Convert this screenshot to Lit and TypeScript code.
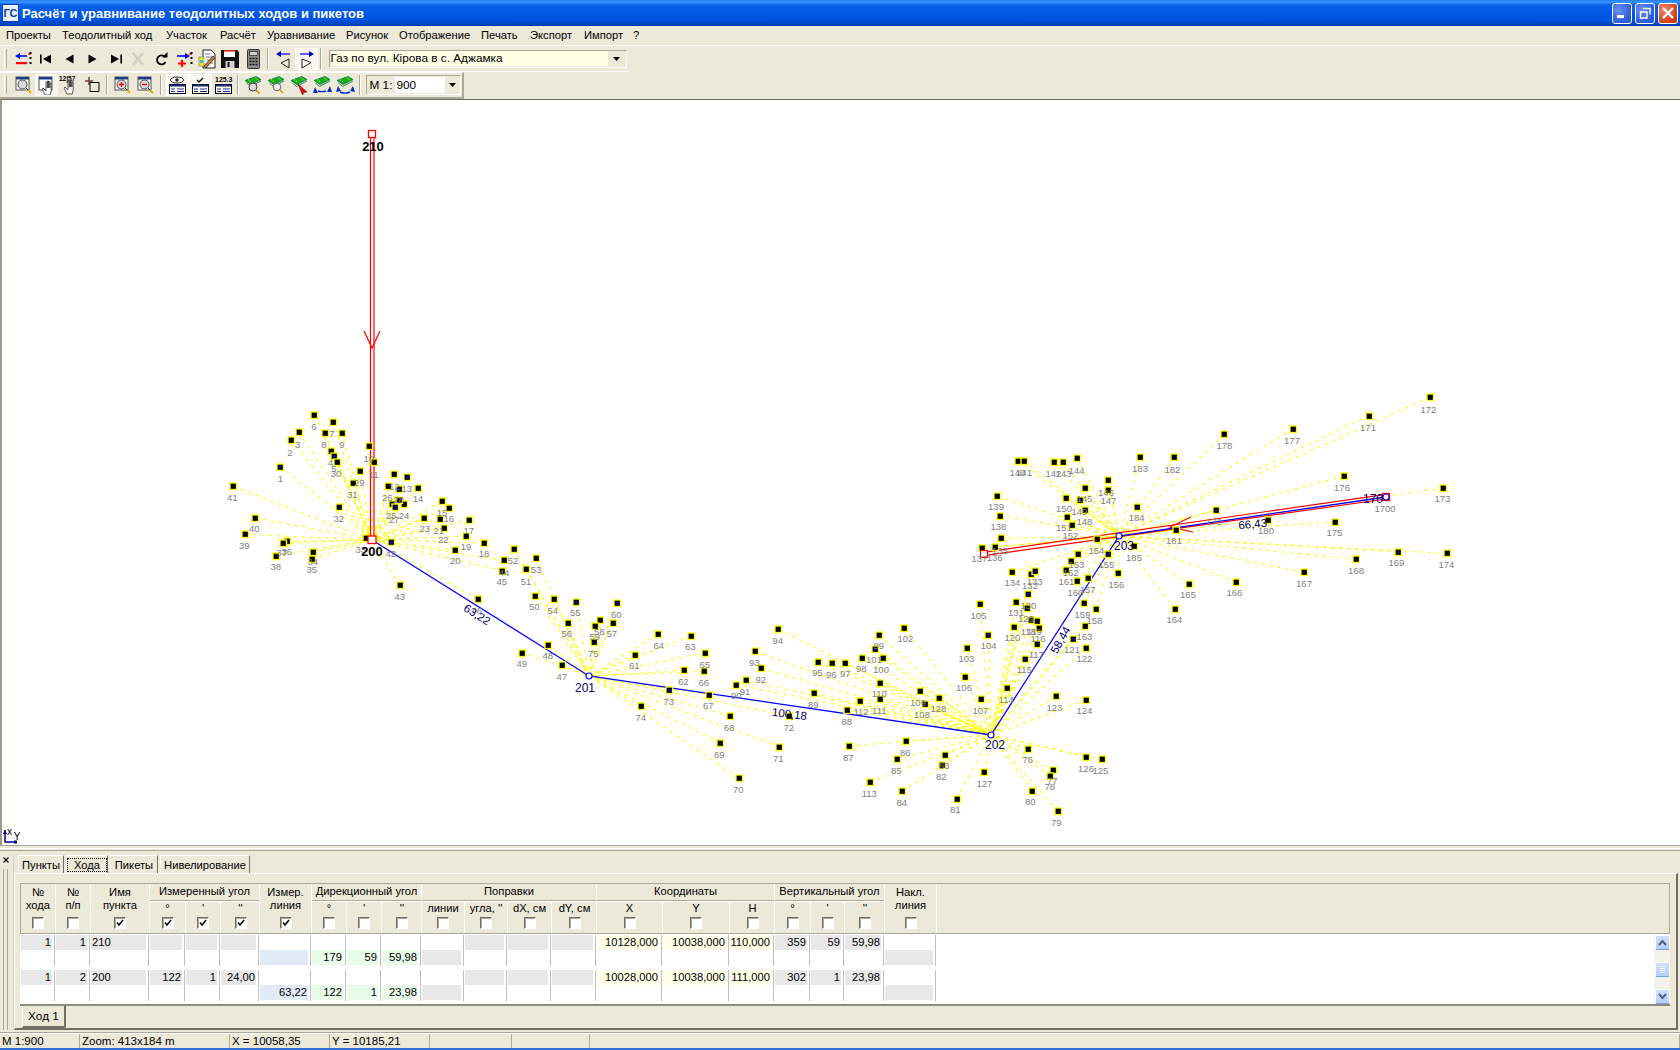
import { LitElement, html, css, svg } from "lit";
import { customElement } from "lit/decorators.js";

const RAW: Record<string, string> = {
  "210,400": "1 211 200 211 236;2 244 121 240 158;3 266 97 263 134;4 364 152 362 188;5 373 168 372 204;6 313 44 312 80;7 370 66 366 100;8 344 98 342 134;9 395 98 396 134;10 476 139 476 176;11 491 187 491 223;12 553 223 553 260;13 590 230 590 266;14 624 264 624 295;15 696 304 696 338;16 718 323 716 356;17 776 361 776 392;18 822 428 822 460;19 768 408 768 440;20 736 450 736 482;21 691 356 686 390;22 703 385 700 418;23 643 353 644 386;24 582 313 582 347;25 546 311 543 345;26 534 259 532 292;27 555 322 552 358;28 566 266 566 298;29 450 212 448 248;30 381 185 378 221;31 429 248 427 284;32 388 321 386 355;33 468 413 452 447;34 308 456 308 485;35 306 476 305 508;36 232 424 230 455;37 219 430 215 458;38 198 468 197 500;39 106 403 103 436;40 136 353 133 386;41 70 259 67 293;42 542 427 542 460;43 571 556 569 590;44 882 481 882 516;45 876 512 875 545;46 805 597 800 630;x 567 299 0 0",
  "0,0": "51 526 569 526 581;52 514 549 513 560;53 536 558 536 569",
  "480,580": "47 245 254 245 290;48 204 194 203 226;49 126 218 125 250;50 166 47 163 80;54 221 57 218 90;55 289 66 286 97;56 263 129 260 160;57 398 129 395 160;58 361 121 358 154;59 346 138 344 170;60 410 70 409 103;61 466 224 463 256;62 611 271 610 305;63 632 168 631 199;64 535 163 536 196;65 676 218 674 252;66 672 274 671 306;67 688 345 685 377;68 750 408 748 442;69 720 490 718 523;70 776 594 775 628;71 897 500 895 535;72 928 408 926 442;73 567 329 566 365;74 483 379 482 412;75 343 185 340 219;90 769 314 769 345;91 798 301 795 335;92 844 265 842 299;93 825 214 823 248;94 894 148 893 180",
  "800,600": "76 685 447 683 478;77 759 511 757 541;78 751 528 749 559;79 774 634 769 667;80 696 572 691 604;81 471 596 466 628;82 426 496 424 529;83 435 465 433 497;84 305 574 305 606;85 291 478 289 510;86 317 424 316 458;87 147 438 145 472;88 141 330 140 364;89 43 280 40 313;95 54 186 52 217;96 97 190 94 222;97 136 189 136 220;98 186 174 184 205;99 237 105 236 136;100 249 175 243 207;101 224 146 222 178;102 313 84 316 115;103 501 144 499 175;104 565 105 566 136;105 540 13 535 47;106 494 231 492 262;107 544 297 541 331;108 374 312 366 344;109 360 272 354 308;110 241 249 238 281;111 239 298 238 332;112 181 303 183 335;113 211 547 208 580;114 621 265 619 298;115 676 176 673 208;116 717 85 714 115;117 711 131 709 163;118 692 60 685 95;119 710 62 703 95;120 641 81 637 113;121 818 116 816 148;122 858 144 853 175;123 768 289 763 322;124 858 300 853 331;125 905 478 901 511;126 859 471 858 505;127 553 516 553 550;128 417 294 415 326",
  "960,420": "129 201 563 198 596;130 205 523 205 556;131 169 545 168 578;132 214 463 210 497;133 226 453 224 485;134 157 456 157 488;135 106 380 120 390;136 124 355 104 412;137 67 384 58 415;138 120 287 115 320;139 112 228 108 260;140 175 123 172 158;141 192 123 192 158;142 283 126 280 161;143 308 127 310 161;144 352 115 350 151;145 376 203 373 236;146 444 181 438 218;147 445 211 445 242;148 374 271 373 304;149 361 240 358 274;150 318 234 312 265;151 320 292 312 323;152 336 315 331 347;153 353 402 349 433;154 411 358 409 391;155 443 401 439 433;156 474 460 469 492;157 384 475 383 508;158 408 568 403 601;159 372 550 367 583;160 352 484 346 517;161 319 451 319 484;162 332 424 332 457;163 376 617 373 650;164 645 567 643 598;165 686 492 684 523",
  "1130,380": "166 317 606 313 637;167 522 577 522 610;168 679 538 678 571;169 804 515 799 548;171 716 107 714 142;172 900 52 895 89;173 940 324 937 355;174 950 520 949 553;175 615 426 613 457;176 642 288 636 322;177 490 146 486 181;178 283 161 283 196;179 258 391 252 425;180 413 420 408 452;181 137 450 132 482;182 132 232 127 268;183 31 231 30 265;184 20 381 20 413;185 12 499 12 532",
};

type Pk = { n: string; x: number; y: number; lx: number; ly: number };
const PTS: Pk[] = [];
for (const k of Object.keys(RAW)) {
  const [ox, oy] = k.split(",").map(Number);
  const f = ox === 0 ? 1 : 3;
  for (const r of RAW[k].split(";")) {
    const [n, a, b, c, d] = r.split(" ");
    PTS.push({ n, x: ox + +a / f, y: oy + +b / f, lx: ox + +c / f, ly: oy + +d / f });
  }
}

const ST: Record<string, [number, number]> = {
  s200: [372, 540],
  s201: [589, 676],
  s202: [991, 735],
  s203: [1119, 536],
  s1700: [1386, 497],
};
function owner(n: string): [number, number] {
  if (n === "x") return ST.s200;
  const v = +n;
  if (v <= 46) return ST.s200;
  if (v <= 75) return ST.s201;
  if (v <= 133 || v === 163) return ST.s202;
  return ST.s203;
}
const BLUE = new Set(["1", "5", "13", "25", "27", "28", "36", "42", "55", "60", "73", "101", "104", "115", "121", "130", "132", "133", "149", "155", "169", "179", "184"]);

const W = [35, 35, 59, 36, 35, 39, 52, 35, 35, 40, 43, 43, 44, 45, 66, 67, 45, 36, 34, 40, 52];

const I = (b: unknown) => html`<svg width="23" height="22" viewBox="0 0 23 22">${b}</svg>`;
const dots = svg`<path d="M18.5 4v15" stroke="#000" stroke-width="2" stroke-dasharray="2 3"/>`;
const win = svg`<rect x="4" y="3" width="13" height="13" fill="#fff" stroke="#555"/><rect x="4" y="3" width="13" height="2.500" fill="#1a3a8a"/>`;
const lens = (c: unknown) => svg`<circle cx="10.500" cy="10.500" r="4.500" fill="#d8d8d8" stroke="#555" stroke-width="1.100"/>${c}<path d="M14 14l2.500 2.500" stroke="#222" stroke-width="1"/><path d="M16 16l3 3" stroke="#d8b000" stroke-width="1.800"/>`;
const hand = svg`<path d="M7 19l-3-6 1-1 3 3V6h1.300v6V5h1.300v7V5.500h1.300V12V7h1.300v8l-1 4z" fill="#fff" stroke="#333" stroke-width=".8"/>`;
const table = svg`<rect x="3.500" y="10.500" width="16" height="9" fill="#fff" stroke="#000"/><path d="M3.500 10.500h16v2h-16z" fill="#1a2a6a"/><path d="M5 15h4M11 15h7M5 17.500h4M11 17.500h7" stroke="#1a2a9a" stroke-width="1"/>`;
const map = (c: unknown) => svg`<path d="M3 6.500L14 2.500l5 3L9 10.500z" fill="#10b020" stroke="#074" stroke-width=".8"/><path d="M6 5.500l4 3M13 3.500l3 3" stroke="#f4e020" stroke-width="1" stroke-dasharray="1.500 1"/><path d="M4.500 9l4 3.500L19 7" fill="none" stroke="#063" stroke-width=".8"/>${c}`;

const ROW1 = [
  I(svg`<path d="M5 8h10" stroke="#00f" stroke-width="1.600"/><path d="M8 5L3 8l5 3z" fill="#00f"/><rect x="4" y="14" width="11" height="2.200" fill="#f00"/><rect x="16.500" y="5" width="2" height="2" fill="#f00"/>${dots}`),
  I(svg`<rect x="5" y="6.500" width="1.600" height="9"/><path d="M16 6.500l-8 4.500 8 4.500z"/>`),
  I(svg`<path d="M15.500 6.500l-8 4.500 8 4.500z"/>`),
  I(svg`<path d="M7.500 6.500l8 4.500-8 4.500z"/>`),
  I(svg`<rect x="16.400" y="6.500" width="1.600" height="9"/><path d="M7 6.500l8 4.500-8 4.500z"/>`),
  I(svg`<path d="M6 5l10 12M16 5L6 17" stroke="#c8c5b5" stroke-width="2.400"/><path d="M6 5l10 12M16 5L6 17" stroke="#ece9d8" stroke-width=".6"/>`),
  I(svg`<path d="M15 9a4.500 4.500 0 1 0 .5 5" fill="none" stroke="#000" stroke-width="1.800"/><path d="M12 9.500h5.500V4z"/>`),
  I(svg`<path d="M4 8h10" stroke="#00f" stroke-width="1.600"/><path d="M12 5l5 3-5 3z" fill="#00f"/><path d="M5 15.500h8M9 12v7" stroke="#f00" stroke-width="2.200"/><rect x="16.500" y="5" width="2" height="2" fill="#f00"/>${dots}`),
  I(svg`<path d="M7 2h8l4 4v14H7z" fill="#fff" stroke="#222"/><path d="M9 6h5M10 9h7M11 12h6M12 15h5" stroke="#777"/><rect x="3" y="9" width="5" height="9" fill="#ffe820" stroke="#886" stroke-width=".7"/><path d="M8 18L17 8l2 2-9 10z" fill="#c08030" stroke="#222" stroke-width=".7"/><rect x="4" y="12" width="3" height="3" fill="#30c0e0"/>`),
  I(svg`<path d="M2 2h16l2 2v16H2z" fill="#111"/><rect x="5" y="2" width="11" height="7" fill="#fff"/><rect x="5" y="2" width="11" height="1.600" fill="#e02020"/><rect x="6.500" y="13" width="9" height="7" fill="#d0d0d0"/><rect x="8.500" y="14" width="2" height="5" fill="#111"/>`),
  I(svg`<rect x="5.500" y="1.500" width="12" height="19" rx="1" fill="#8c8c8c" stroke="#333"/><rect x="7.500" y="3.500" width="8" height="4" fill="#c8d4b8" stroke="#222" stroke-width=".7"/><path d="M7.500 10.500h8M7.500 13.500h8M7.500 16.500h8" stroke="#111" stroke-width="1.400" stroke-dasharray="2 1"/>`),
];
const ROW1B = [
  I(svg`<path d="M6 6h12" stroke="#00c" stroke-width="1.200"/><path d="M9 3L4 6l5 3z" fill="#00c"/><path d="M17 11L9 15l8 5z" fill="none" stroke="#222"/>`),
  I(svg`<path d="M5 6h12" stroke="#00c" stroke-width="1.200"/><path d="M14 3l5 3-5 3z" fill="#00c"/><path d="M7 11l9 3.500-9 5.500z" fill="none" stroke="#222"/>`),
];
const ROW2A = [
  I(svg`${win}${lens(svg``)}`),
  I(svg`${win}<g transform="translate(3 2)">${hand}</g>`),
  I(svg`<text x="1" y="7" font-family="Liberation Sans" font-size="6.500" font-weight="700">12|57</text><g transform="translate(2 1)">${hand}</g>`),
  I(svg`<path d="M8 3v8M4 7h8" stroke="#000"/><path d="M9 8.500h9v9H9z" fill="none" stroke="#000"/><rect x="7" y="6" width="2" height="2" fill="#e02020"/>`),
];
const ROW2B = [
  I(svg`${win}${lens(svg`<path d="M8 10.500h5M10.500 8v5" stroke="#e00" stroke-width="1.300"/>`)}`),
  I(svg`${win}${lens(svg`<path d="M8 10.500h5" stroke="#e00" stroke-width="1.300"/>`)}`),
];
const ROW2C = [
  I(svg`<ellipse cx="11" cy="6" rx="6.500" ry="3" fill="#fff" stroke="#222"/><circle cx="11" cy="6" r="1.800" fill="#222"/>${table}`),
  I(svg`<path d="M8 6l2 2 4-4" fill="none" stroke="#000" stroke-width="1.300"/>${table}`),
  I(svg`<text x="3" y="7.500" font-family="Liberation Sans" font-size="7" font-weight="700">125.3</text>${table}`),
];
const ROW2D = [
  I(svg`${map(svg`<circle cx="11" cy="13" r="4" fill="#d8d8d8" stroke="#444"/><path d="M14 16l3.500 3.500" stroke="#c8a000" stroke-width="1.800"/>`)}`),
  I(svg`${map(svg`<circle cx="12" cy="13" r="3.800" fill="#eee" stroke="#666"/><path d="M15 16l3 3" stroke="#c8a000" stroke-width="1.600"/>`)}`),
  I(svg`${map(svg`<path d="M10 10l9 8-3 .5-1.500 2.500z" fill="#e01010" stroke="#600" stroke-width=".5"/>`)}`),
  I(svg`${map(svg`<path d="M4 13l3 6-5 0z" fill="#0030c0"/><path d="M7 17a9 6 0 0 0 8 0" fill="none" stroke="#0030c0" stroke-width="1.400"/><path d="M19 12l-3 6 5 0z" fill="#0030c0"/>`)}`),
  I(svg`${map(svg`<path d="M4 12l3 5-5 1z" fill="#0030c0"/><path d="M6 18a9 6 0 0 0 10 0" fill="none" stroke="#0030c0" stroke-width="1.400"/><path d="M19 12l-3 5 5 1z" fill="#0030c0"/>`)}`),
];

const arrow = html`<svg width="7" height="4" viewBox="0 0 7 4"><path d="M0 0h7L3.500 4z"/></svg>`;

type Cell = { t?: string; b?: string; tc?: string; bc?: string; a?: string };
const ROWS: Cell[][] = [
  [
    { t: "1", tc: "g" }, { t: "1", tc: "g" }, { t: "210", tc: "g", a: "l" },
    { tc: "g" }, { tc: "g" }, { tc: "g" }, { bc: "b" },
    { b: "179", bc: "v" }, { b: "59", bc: "v" }, { b: "59,98", bc: "v" },
    { bc: "g" }, { tc: "g" }, { tc: "g" }, { tc: "g" },
    { t: "10128,000", tc: "y" }, { t: "10038,000", tc: "y" }, { t: "110,000", tc: "y" },
    { t: "359", tc: "g" }, { t: "59", tc: "g" }, { t: "59,98", tc: "g" }, { bc: "g" },
  ],
  [
    { t: "1", tc: "g" }, { t: "2", tc: "g" }, { t: "200", tc: "g", a: "l" },
    { t: "122", tc: "g" }, { t: "1", tc: "g" }, { t: "24,00", tc: "g" }, { b: "63,22", bc: "b" },
    { b: "122", bc: "v" }, { b: "1", bc: "v" }, { b: "23,98", bc: "v" },
    { bc: "g" }, { tc: "g" }, { tc: "g" }, { tc: "g" },
    { t: "10028,000", tc: "y" }, { t: "10038,000", tc: "y" }, { t: "111,000", tc: "y" },
    { t: "302", tc: "g" }, { t: "1", tc: "g" }, { t: "23,98", tc: "g" }, { bc: "g" },
  ],
];

@customElement("app-root")
export class AppRoot extends LitElement {
  static styles = css`
    :host { display: flex; flex-direction: column; width: 1680px; height: 1050px; background: #ece9d8; overflow: hidden;
      font-family: "Liberation Sans", Arial, sans-serif; font-size: 11.2px; color: #000; }
    .title { height: 26px; flex: none; display: flex; align-items: center; padding-left: 2px; gap: 3px; color: #fff;
      font-weight: 700; font-size: 13px;
      background: linear-gradient(#1f7cf0 0, #3e95ff 2px, #0a62ea 5px, #0058e4 14px, #0054e0 20px, #0048cc 23px, #0038a8 26px); }
    .title .t { flex: 1; }
    .wb { display: flex; gap: 3px; padding-right: 2px; }
    .wbtn { width: 20px; height: 21px; box-sizing: border-box; border: 1px solid #fff; border-radius: 3px;
      background: radial-gradient(circle at 30% 30%, #6a90ee, #2a58d8 75%); display: flex; align-items: center; justify-content: center; }
    .wbtn.c { background: radial-gradient(circle at 30% 30%, #ee8a6a, #d03a14 75%); }
    .menu { height: 19px; flex: none; display: flex; align-items: center; position: relative; }
    .menu span { position: absolute; top: 3px; white-space: nowrap; }
    .wl { height: 1px; background: #fff; flex: none; }
    .tb { flex: none; display: flex; align-items: center; box-sizing: border-box; position: relative; }
    .tb1 { height: 26px; width: 628px; padding-left: 11.5px; border-bottom: 1px solid #fff; }
    .tb2 { height: 27px; width: 464px; padding-left: 11.5px; border-right: 2px solid #aca899; border-bottom: 2px solid #aca899; border-top: 1px solid #fff; }
    .grip { position: absolute; left: 4px; top: 3px; bottom: 3px; width: 1px; border-left: 1px solid #fff; border-right: 1px solid #aca899; }
    .ib { width: 23px; height: 22px; flex: none; display: flex; box-sizing: border-box; }
    .ib svg { display: block; flex: none; }
    .ib.p { background: #f6f5ee; outline: 1px solid #fff; outline-offset: -1px; box-shadow: inset -1px -1px 0 #fff, inset 1px 1px 0 #d6d3c4; }
    .sep { width: 7px; flex: none; align-self: stretch; display: flex; justify-content: center; margin: 2px 0; }
    .sep::after { content: ""; width: 1px; background: #aca899; border-right: 1px solid #fff; }
    .sep.w { width: 9px; }
    .combo { display: flex; align-items: center; box-sizing: border-box; height: 18px; border: 1px solid #fff; border-left-color: #aca899; border-top-color: #aca899; }
    .c1 { width: 298px; margin-left: 4px; padding: 1px; }
    .c1 .f { flex: 1; background: #ffffe6; height: 15px; line-height: 15px; padding-left: 0; font-size: 11.8px; white-space: nowrap; }
    .c1 .a { width: 17px; display: flex; justify-content: center; }
    .c2 { width: 95px; margin-left: 2px; padding-left: 3px; height: 20px; font-size: 11.8px; white-space: nowrap; }
    .c2 .f { background: #fff; width: 53px; height: 16px; line-height: 16px; margin-left: 3px; padding-left: 1px; box-sizing: border-box; }
    .c2 .a { width: 15px; display: flex; justify-content: center; }
    .canvas { flex: 1; min-height: 0; background: #fff; border-top: 1px solid #716f64; border-left: 2px solid #9d9a8a; box-sizing: border-box; overflow: hidden; display: flex; }
    .canvas svg { display: block; flex: none; }
    .rim { height: 10px; flex: none; border-top: 1px solid #aca899; box-sizing: border-box; background: linear-gradient(#ece9d8 0 2px, #fff 2px 3px, #ece9d8 3px 4px, #aca899 4px 5px, #ece9d8 5px); }
    .bottom { flex: none; height: 175px; display: flex; }
    .dock { width: 14px; flex: none; position: relative; border-right: 1px solid #d0cdbc; box-sizing: border-box; }
    .dock svg { display: block; margin: 1px 0 0 2px; }
    .dock i { position: absolute; left: 3px; top: 14px; bottom: 0; width: 3px; border-left: 1px solid #aca899; border-right: 1px solid #aca899; }
    .right { flex: 1; min-width: 0; display: flex; flex-direction: column; padding-right: 2px; }
    .tabs { height: 18px; flex: none; display: flex; padding-left: 4px; align-items: flex-end; gap: 2px; }
    .tab { height: 18px; box-sizing: border-box; border: 1px solid #fff; border-right: 1px solid #716f64; border-bottom: none; padding: 3px 0 0; text-align: center; white-space: nowrap; }
    .tab.s span { outline: 1px dotted #000; padding: 0 6px; }
    .panel { height: 157px; flex: none; border: 1px solid #fff; border-right: 2px solid #716f64; border-bottom: 2px solid #716f64; box-sizing: border-box; padding: 9px 6px 0 5px; display: flex; flex-direction: column; }
    .hdr { display: flex; height: 51px; flex: none; border: 1px solid #aca899; box-sizing: border-box; }
    .hc { box-sizing: border-box; flex: none; display: flex; flex-direction: column; align-items: center; border-right: 1px solid #fff; text-align: center; line-height: 13px; position: relative; padding-top: 2px; }
    .hc .cb { position: absolute; bottom: 4px; left: 50%; margin-left: -6px; }
    .grp { flex: none; display: flex; flex-direction: column; box-sizing: border-box; border-right: 1px solid #fff; }
    .grp .gt { height: 17px; flex: none; text-align: center; line-height: 15px; border-bottom: 1px solid #aca899; box-shadow: 0 1px 0 #fff; box-sizing: border-box; white-space: nowrap; }
    .grp .gs { display: flex; flex: 1; }
    .grp .hc { height: 32px; padding-top: 1px; }
    .grp .hc:last-child { border-right: none; }
    .cb { width: 12px; height: 12px; box-sizing: border-box; background: #fff; border: 1px solid #fff; border-left-color: #716f64; border-top-color: #716f64; box-shadow: inset 1px 1px 0 #aca899; display: block; }
    .cb svg { display: block; margin: 1px; }
    .body { flex: none; height: 72px; background: #fff; display: flex; padding-top: 1px; box-sizing: border-box; border-bottom: 2px solid #8d8b7c; }
    .rows { flex: 1; display: flex; flex-direction: column; gap: 4px; }
    .row { display: flex; height: 31px; }
    .cell { flex: none; box-sizing: border-box; border-right: 1px solid #c0c0c0; padding: 0 2px 0 1px; display: flex; flex-direction: column; }
    .ln { height: 15px; line-height: 15px; text-align: right; padding-right: 1px; white-space: nowrap; box-sizing: border-box; }
    .ln.l { text-align: left; padding-left: 1px; }
    .g { background: #e8e8e8; }
    .b { background: #e2eaf5; }
    .v { background: #e9fbe9; }
    .y { background: #ffffe9; }
    .sb { width: 16px; flex: none; background: #f3f2ec; display: flex; flex-direction: column; justify-content: space-between; position: relative; align-items: center; height: 69px; }
    .sbb { width: 15px; height: 15px; box-sizing: border-box; border: 1px solid #fff; border-radius: 2px; background: linear-gradient(#d2e0fc, #b8cdf8); border-bottom-color: #7d9fe0; display: flex; align-items: center; justify-content: center; }
    .tab2row { flex: 1; display: flex; padding-left: 2px; }
    .tab2 { width: 44px; height: 22px; box-sizing: border-box; border: 1px solid #fff; border-top: none; border-right: 2px solid #716f64; border-bottom: 2px solid #716f64; text-align: center; line-height: 21px; font-size: 11.8px; border-radius: 0 0 2px 0; }
    .gapl { height: 2px; flex: none; border-bottom: 1px solid #aca899; box-sizing: content-box; }
    .status { height: 15px; flex: none; display: flex; border-top: 1px solid #fff; box-sizing: border-box; }
    .status div { box-sizing: border-box; border-right: 1px solid #aca899; padding-left: 2px; flex: none; height: 15px; line-height: 14px; white-space: nowrap; font-size: 11.5px; }
    .strip { height: 2px; flex: none; background: #2f70d8; }
    text { font-family: "Liberation Sans", Arial, sans-serif; }
  `;

  private cb(on: boolean) {
    return html`<span class="cb">${on
      ? html`<svg width="8" height="8" viewBox="0 0 8 8"><path d="M1 3.500l2 2.500 4-5" fill="none" stroke="#000" stroke-width="1.600"/></svg>`
      : ""}</span>`;
  }

  private hc(idx: number, label: unknown, on: boolean) {
    return html`<div class="hc" style="width:${W[idx]}px">${label}${this.cb(on)}</div>`;
  }

  private grp(title: string, start: number, labels: string[], on: boolean) {
    const w = labels.reduce((s, _, i) => s + W[start + i], 0);
    return html`<div class="grp" style="width:${w}px">
      <div class="gt">${title}</div>
      <div class="gs">${labels.map((l, i) => this.hc(start + i, l, on))}</div>
    </div>`;
  }

  private canvas() {
    const [ax, ay] = ST.s200;
    const [bx, by] = ST.s201;
    const [cx, cy] = ST.s202;
    const [dx, dy] = ST.s203;
    const [ex, ey] = ST.s1700;
    const rx = 984, ry = 554;
    const ring = (x: number, y: number) => svg`<circle cx=${x} cy=${y} r="3" fill="#fff" stroke="#00f" stroke-width="1.100"/>`;
    const st = (t: string, x: number, y: number, c = "#00006e") => svg`<text x=${x} y=${y} text-anchor="middle" font-size="12" fill=${c}>${t}</text>`;
    const rot = (t: string, x: number, y: number, a: number) =>
      svg`<text transform="translate(${x} ${y}) rotate(${a})" text-anchor="middle" font-size="11.500" fill="#00006e">${t}</text>`;
    return html`<svg width="1678" height="745" viewBox="2 100 1678 745">
      <g stroke="#ffff00" stroke-width="1.100" stroke-dasharray="3 5" fill="none">
        ${PTS.map((p) => {
          const [ox, oy] = owner(p.n);
          return svg`<line x1=${p.x} y1=${p.y} x2=${ox} y2=${oy}/>`;
        })}
      </g>
      <g fill="none" stroke="#ff0000" stroke-width="1.200">
        <path d="M370.500 134V540M374 134V540"/>
        <path d="M364 331L372 348L380 331"/>
        <path d="M${rx} ${ry - 1.7}L${ex} ${ey - 2.700}M${rx} ${ry + 1.7}L${ex} ${ey + 2}"/>
        <path d="M1191 517L1170 527L1193 532"/>
        <rect x="368.500" y="130.500" width="7" height="7" fill="#fff" stroke-width="1.300"/>
      </g>
      <path d="M${ax} ${ay}L${bx} ${by}L${cx} ${cy}L${dx} ${dy}L${ex} ${ey}" fill="none" stroke="#0000ff" stroke-width="1.300"/>
      <g>
        ${PTS.map((p) => svg`
          <rect x=${Math.round(p.x) - 3} y=${Math.round(p.y) - 3} width="6.500" height="6.500" fill="#000" stroke="#ffff00" stroke-width="1.300"/>
          ${BLUE.has(p.n) ? svg`<rect x=${Math.round(p.x) - 1} y=${Math.round(p.y) - 1} width="2.500" height="2.500" fill="#0000d0"/>` : ""}
        `)}
      </g>
      <rect x="${rx - 3.500}" y="${ry - 3.500}" width="7" height="7" fill="#fff" stroke="#f00" stroke-width="1.200"/>
      <rect x="368" y="536" width="8" height="7.500" fill="#fff" stroke="#f00" stroke-width="1.300"/>
      <rect x="1382.500" y="493.500" width="7" height="7" fill="#fff" stroke="#f00" stroke-width="1.300"/>
      ${ring(bx, by)}${ring(cx, cy)}${ring(dx, dy)}${ring(ex, ey)}
      <g font-size="9.500" fill="#808080" text-anchor="middle">
        ${PTS.filter((p) => p.n !== "x").map((p) => svg`<text x=${p.lx} y=${p.ly + 3.500}>${p.n}</text>`)}
        <text x="1385" y="511.500">1700</text>
      </g>
      ${st("201", 585, 692)}${st("202", 995, 749)}${st("203", 1124, 550)}${st("170", 1373, 503)}
      <text x="372" y="556" text-anchor="middle" font-size="13" font-weight="700" fill="#000">200</text>
      <text x="373" y="151" text-anchor="middle" font-size="13" font-weight="700" fill="#000">210</text>
      ${rot("63,22", 475, 618, 32)}${rot("100,18", 789, 718, 7)}${rot("58,44", 1064, 642, -61)}${rot("66,43", 1253, 528, -5)}
      <path d="M5 830V842H16" fill="none" stroke="#00008a" stroke-width="1.500"/>
      <path d="M3 834l2-4 2 4z" fill="#00008a"/><rect x="14" y="840.500" width="3" height="3" fill="#00008a"/>
      <text x="9.500" y="835" font-size="10" text-anchor="middle" fill="#000">x</text><text x="17" y="840" font-size="10" text-anchor="middle" fill="#000">Y</text>
    </svg>`;
  }

  render() {
    const menu: [string, number][] = [["Проекты", 6], ["Теодолитный ход", 62], ["Участок", 166], ["Расчёт", 220], ["Уравнивание", 267], ["Рисунок", 346], ["Отображение", 399], ["Печать", 481], ["Экспорт", 530], ["Импорт", 584], ["?", 633]];
    const ib = (x: unknown, p = false) => html`<div class="ib ${p ? "p" : ""}">${x}</div>`;
    return html`
      <div class="title">
        <svg width="17" height="18" viewBox="0 0 17 18"><rect x=".5" y=".5" width="16" height="17" fill="#e8f0ff" stroke="#1040a0"/><text x="8.500" y="13" text-anchor="middle" font-size="11" fill="#103a9a">ГС</text></svg>
        <span class="t">Расчёт и уравнивание теодолитных ходов и пикетов</span>
        <div class="wb">
          <div class="wbtn"><svg width="12" height="12"><rect x="1" y="8" width="7" height="3" fill="#fff"/></svg></div>
          <div class="wbtn"><svg width="12" height="12"><path d="M4 1.500h7v6M1.500 5h6.500v6H1.500z" fill="none" stroke="#fff" stroke-width="1.400"/></svg></div>
          <div class="wbtn c"><svg width="12" height="12"><path d="M1 1l10 10M11 1L1 11" stroke="#fff" stroke-width="2.200"/></svg></div>
        </div>
      </div>
      <div class="menu">${menu.map(([t, x]) => html`<span style="left:${x}px">${t}</span>`)}</div>
      <div class="wl"></div>
      <div class="tb tb1"><i class="grip"></i>
        ${ROW1.map((x) => ib(x))}<div class="sep"></div>${ib(ROW1B[0])}${ib(ROW1B[1], true)}<div class="sep"></div>
        <div class="combo c1"><div class="f">Газ по вул. Кірова в с. Аджамка</div><div class="a">${arrow}</div></div>
      </div>
      <div class="tb tb2"><i class="grip"></i>
        ${ib(ROW2A[0])}${ib(ROW2A[1], true)}${ib(ROW2A[2])}${ib(ROW2A[3])}<div class="sep"></div>
        ${ROW2B.map((x) => ib(x))}<div class="sep w"></div>
        ${ib(ROW2C[0], true)}${ib(ROW2C[1], true)}${ib(ROW2C[2])}<div class="sep"></div>
        ${ROW2D.map((x) => ib(x))}<div class="sep"></div>
        <div class="combo c2">M 1:<div class="f">900</div><div class="a">${arrow}</div></div>
      </div>
      <div class="canvas">${this.canvas()}</div>
      <div class="rim"></div>
      <div class="bottom">
        <div class="dock"><svg width="9" height="9"><path d="M1.500 1.500l5 5M6.500 1.500l-5 5" stroke="#000" stroke-width="1.200"/></svg><i></i></div>
        <div class="right">
          <div class="tabs">
            <div class="tab" style="width:46px">Пункты</div>
            <div class="tab s" style="width:42px"><span>Хода</span></div>
            <div class="tab" style="width:48px">Пикеты</div>
            <div class="tab" style="width:90px">Нивелирование</div>
          </div>
          <div class="panel">
            <div class="hdr">
              ${this.hc(0, html`№<br />хода`, false)}
              ${this.hc(1, html`№<br />п/п`, false)}
              ${this.hc(2, html`Имя<br />пункта`, true)}
              ${this.grp("Измеренный угол", 3, ["°", "'", "''"], true)}
              ${this.hc(6, html`Измер.<br />линия`, true)}
              ${this.grp("Дирекционный угол", 7, ["°", "'", "''"], false)}
              ${this.grp("Поправки", 10, ["линии", "угла, ''", "dX, см", "dY, см"], false)}
              ${this.grp("Координаты", 14, ["X", "Y", "H"], false)}
              ${this.grp("Вертикальный угол", 17, ["°", "'", "''"], false)}
              ${this.hc(20, html`Накл.<br />линия`, false)}
            </div>
            <div class="body">
              <div class="rows">
                ${ROWS.map((r) => html`<div class="row">${r.map((c, i) => html`<div class="cell" style="width:${W[i]}px">
                  <div class="ln ${c.tc ?? ""} ${c.a ?? ""}">${c.t ?? ""}</div>
                  <div class="ln ${c.bc ?? ""}">${c.b ?? ""}</div>
                </div>`)}</div>`)}
              </div>
              <div class="sb">
                <div class="sbb"><svg width="9" height="7"><path d="M1 6l3.500-4L8 6" fill="none" stroke="#4d6185" stroke-width="2"/></svg></div>
                <div class="sbb"><svg width="7" height="9"><path d="M1 1.500h5M1 3.500h5M1 5.500h5M1 7.500h5" stroke="#eef4fe" stroke-width="1"/></svg></div>
                <div class="sbb"><svg width="9" height="7"><path d="M1 1l3.500 4L8 1" fill="none" stroke="#4d6185" stroke-width="2"/></svg></div>
              </div>
            </div>
            <div class="tab2row"><div class="tab2">Ход 1</div></div>
          </div>
        </div>
      </div>
      <div class="gapl"></div>
      <div class="status">
        <div style="width:80px">M 1:900</div>
        <div style="width:150px">Zoom: 413x184 m</div>
        <div style="width:100px">X = 10058,35</div>
        <div style="width:100px">Y = 10185,21</div>
        <div style="width:82px"></div>
        <div style="width:78px"></div>
        <div style="flex:1"></div>
      </div>
      <div class="strip"></div>
    `;
  }
}
